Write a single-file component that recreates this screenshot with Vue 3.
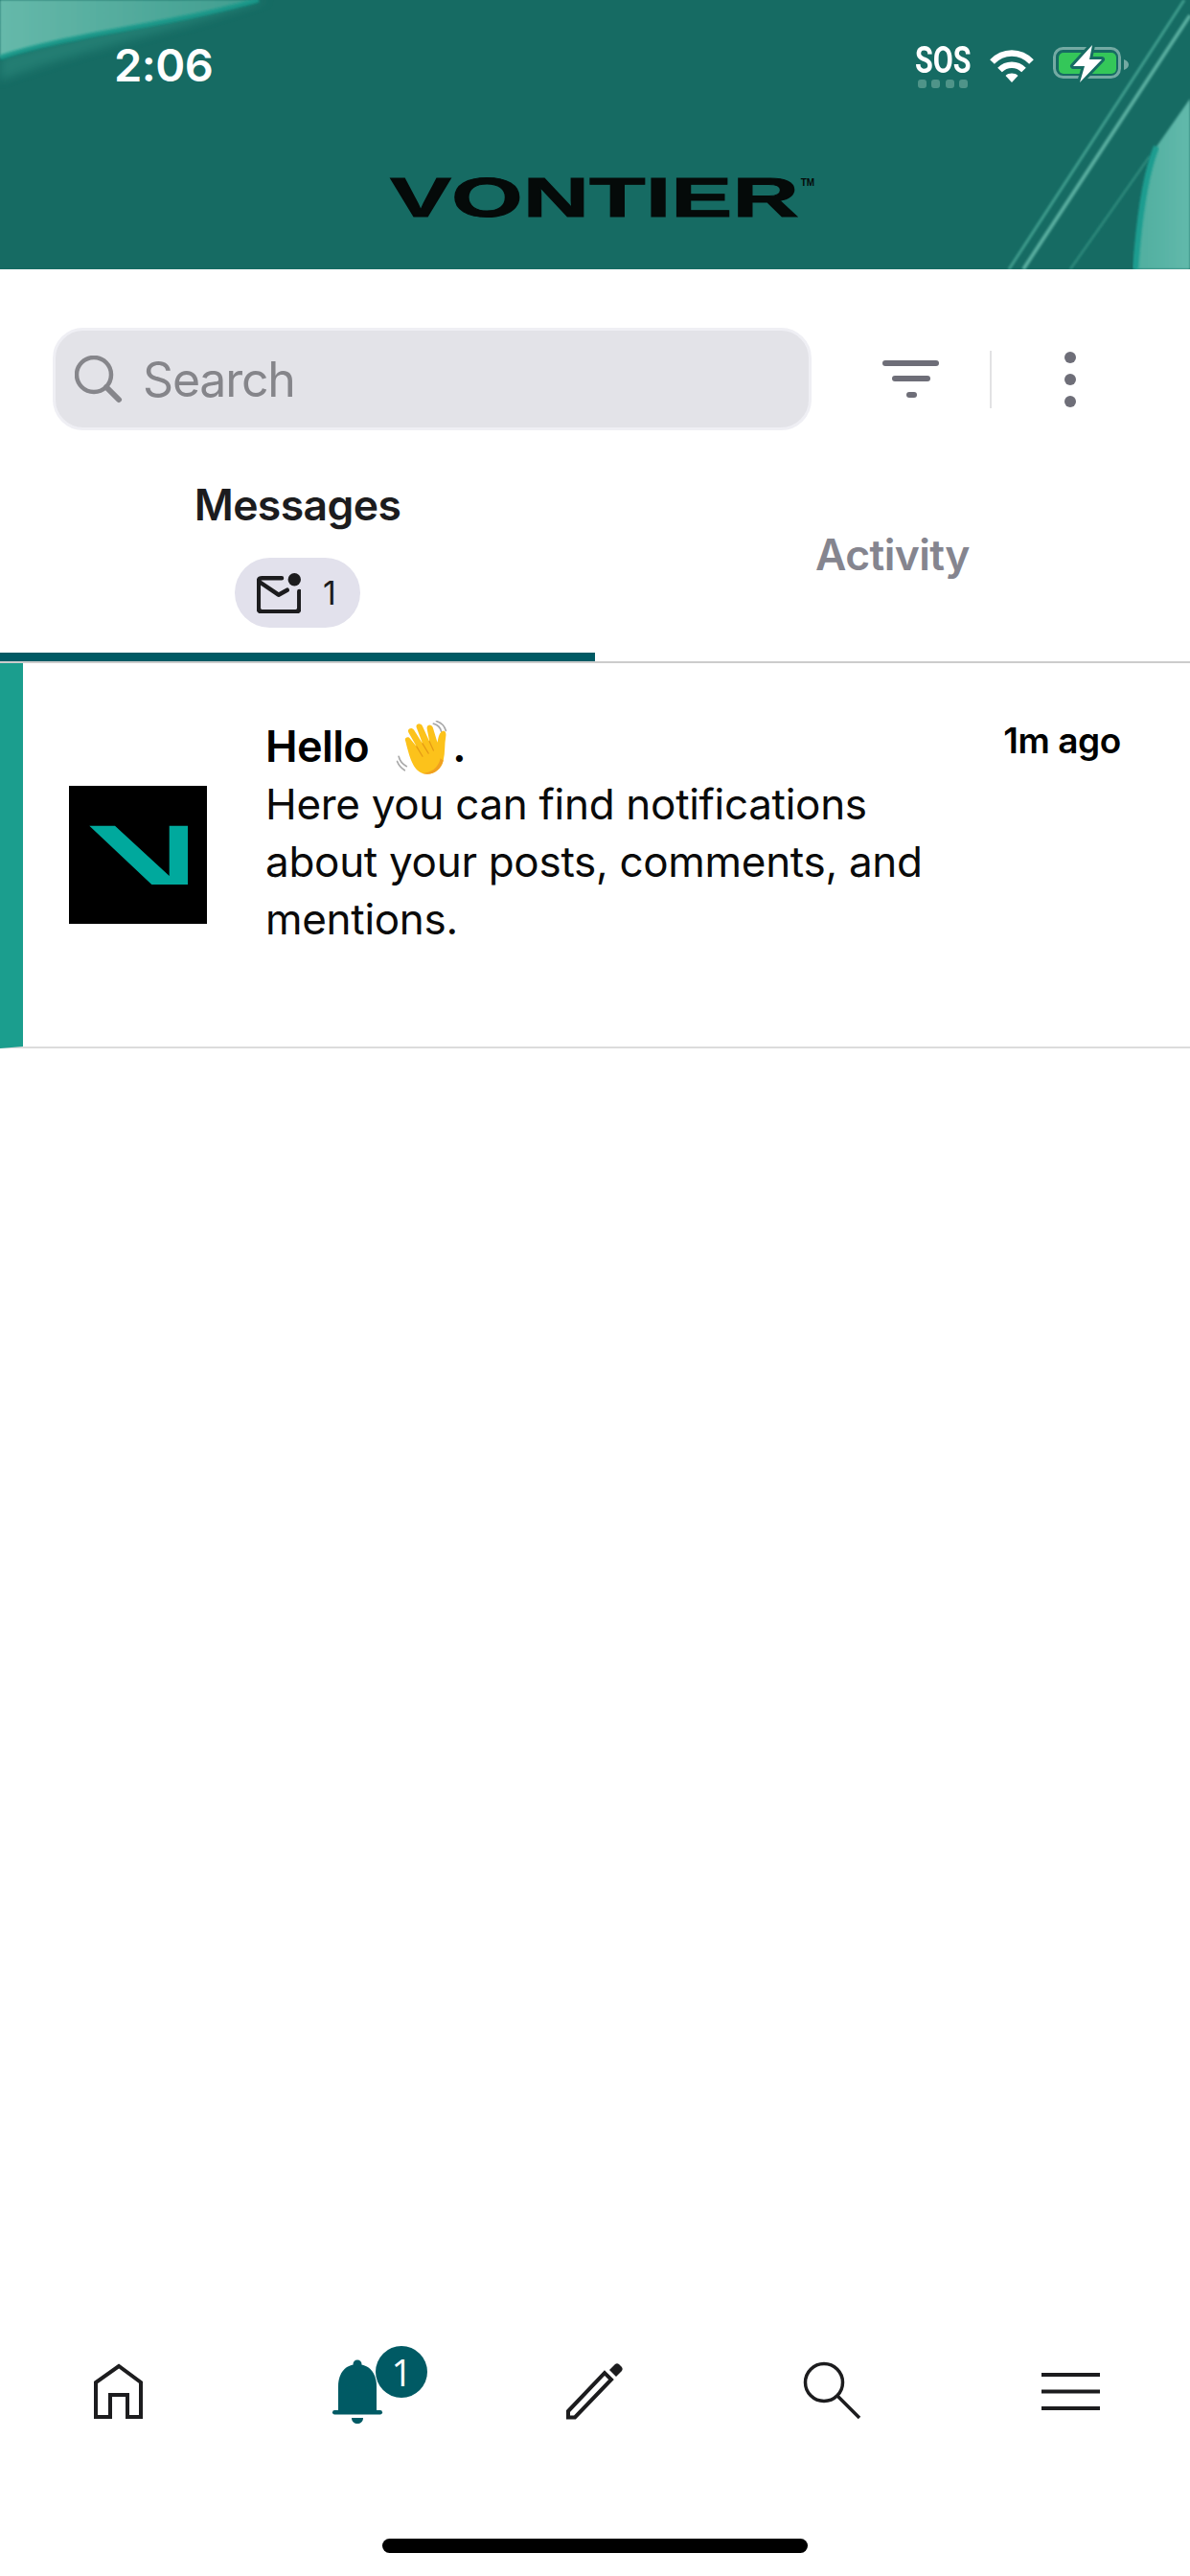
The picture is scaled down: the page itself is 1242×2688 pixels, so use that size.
<script setup>
const body = 'Here you can find notifications about your posts, comments, and mentions.'
</script>

<template>
  <div class="app">
    <header class="header">
      <svg class="art" viewBox="0 0 1242 281" preserveAspectRatio="none">
        <defs>
          <linearGradient id="tl" x1="0" y1="0" x2="1" y2="0">
            <stop offset="0" stop-color="#66b9aa" />
            <stop offset="1" stop-color="#3f9d8f" />
          </linearGradient>
          <linearGradient id="rb" x1="0" y1="0" x2="1" y2="0">
            <stop offset="0" stop-color="#4fae9f" />
            <stop offset="1" stop-color="#62b9ab" />
          </linearGradient>
          <filter id="soft" x="-10%" y="-10%" width="120%" height="120%">
            <feGaussianBlur stdDeviation="1.2" />
          </filter>
          <filter id="softer" x="-10%" y="-30%" width="120%" height="160%">
            <feGaussianBlur stdDeviation="5" />
          </filter>
        </defs>
        <rect width="1242" height="281" fill="#166b63" />
        <path d="M0 84C90 50 180 34 280 0H200C130 30 60 40 0 60Z" fill="#2e8d80" opacity=".55" filter="url(#softer)" />
        <path d="M0 0H270C180 26 80 34 0 60Z" fill="url(#tl)" filter="url(#soft)" />
        <path d="M0 60C80 34 170 28 270 0" fill="none" stroke="#129a8b" stroke-width="5" opacity=".8" filter="url(#soft)" />
        <g fill="none" filter="url(#soft)">
          <path d="M1053 281L1197 60L1236 0" stroke="#3f9c8d" stroke-width="3" />
          <path d="M1068 281L1213 60L1242 16" stroke="#58ad9f" stroke-width="4" />
          <path d="M1117 281L1200 163" stroke="#2f8a7d" stroke-width="2.5" />
        </g>
        <path d="M1242 103L1207 153C1194 185 1188 240 1185 281H1242Z" fill="url(#rb)" filter="url(#soft)" />
        <path d="M1207 153C1194 185 1188 240 1185 281" fill="none" stroke="#1f9d90" stroke-width="6" filter="url(#soft)" />
      </svg>
      <div class="status">
        <span class="time">2:06</span>
        <div class="status-icons">
          <div class="sos">
            <span class="sos-text">SOS</span>
            <div class="sos-dots">
              <i></i><i></i><i></i><i></i>
            </div>
          </div>
          <svg class="wifi" width="48" height="36" viewBox="0 0 48 36">
            <path d="M3.500 14.500C15 2.500 33 2.500 44.500 14.500" fill="none" stroke="#fff" stroke-width="6.500" />
            <path d="M11.500 23C18.500 16 29.500 16 36.500 23" fill="none" stroke="#fff" stroke-width="6.500" />
            <path d="M17.500 29C21 25.800 27 25.800 30.500 29L24 36Z" fill="#fff" />
          </svg>
          <svg class="battery" width="80" height="42" viewBox="0 0 80 42">
            <rect x="1.500" y="4.500" width="68" height="30" rx="9" fill="none" stroke="#74aaa3" stroke-width="3" />
            <rect x="6" y="9" width="60" height="22" rx="5" fill="#34c759" />
            <path d="M74 16C77 17 79 19 79 21.500C79 24 77 26 74 27Z" fill="#74aaa3" />
            <path d="M41 1L21 23H33L28 40L51 16H38Z" fill="#fff" stroke="#166b63" stroke-width="6" paint-order="stroke" stroke-linejoin="round" />
          </svg>
        </div>
      </div>
      <div class="logo">
        <span class="logo-word">VONTIER</span>
        <span class="logo-tm">TM</span>
      </div>
    </header>

    <section class="toolbar">
      <div class="search">
        <svg width="50" height="50" viewBox="0 0 50 50">
          <circle cx="20" cy="20" r="18" fill="none" stroke="#86868b" stroke-width="4.500" />
          <path d="M33 33L46 46" stroke="#86868b" stroke-width="6" stroke-linecap="round" />
        </svg>
        <span class="search-text">Search</span>
      </div>
      <div class="tools">
        <svg width="60" height="40" viewBox="0 0 60 40">
          <rect x="0" y="0" width="59" height="6" rx="3" fill="#6e6e78" />
          <rect x="10" y="16" width="40" height="6" rx="3" fill="#6e6e78" />
          <rect x="25" y="33" width="11" height="6" rx="3" fill="#6e6e78" />
        </svg>
        <span class="divider"></span>
        <svg width="14" height="60" viewBox="0 0 14 60">
          <circle cx="7" cy="7" r="6" fill="#6e6e78" />
          <circle cx="7" cy="30" r="6" fill="#6e6e78" />
          <circle cx="7" cy="53" r="6" fill="#6e6e78" />
        </svg>
      </div>
    </section>

    <nav class="tabs">
      <div class="tab active">
        <span class="tab-label">Messages</span>
        <span class="pill">
          <svg width="46" height="42" viewBox="0 0 46 42">
            <path d="M26 5.300H5.500Q1.800 5.300 1.800 9V36.600Q1.800 40.300 5.500 40.300H40.600Q44.300 40.300 44.300 36.600V19" fill="none" stroke="#1c1c1e" stroke-width="4.500" stroke-linecap="round" />
            <path d="M2.500 9L22.700 22.700L31.700 17.700" fill="none" stroke="#1c1c1e" stroke-width="4.500" stroke-linecap="round" stroke-linejoin="round" />
            <circle cx="39.300" cy="6.700" r="6.700" fill="#1c1c1e" />
          </svg>
          <span class="pill-count">1</span>
        </span>
      </div>
      <div class="tab">
        <span class="tab-label muted">Activity</span>
      </div>
    </nav>

    <article class="row">
      <svg class="avatar" width="144" height="144" viewBox="0 0 144 144">
        <rect width="144" height="144" fill="#000" />
        <path d="M21.300 41.700H48L104.700 94V41.700H124V103H86.300Z" fill="#00a99d" />
      </svg>
      <div class="row-text">
        <div class="row-title">
          <span>Hello</span>
          <svg class="wave" width="60" height="58" viewBox="0 0 54 56">
            <g fill="none" stroke="#a9a9a9" stroke-width="1.600" stroke-linecap="round">
              <path d="M37 3C41 4 44 7 45 11" />
              <path d="M40 0.500C45 2 48 5 49.500 10" />
              <path d="M2 36C3 40 6 44 10 46" />
              <path d="M0.500 41C2 45 5 48 8 50" />
            </g>
            <path d="M9 21C7 18 11 15 13.500 18L20 26L12 12C10 8.500 15 6 17.500 9.500L26 23L20 7C18.500 3 24 1.500 26 5.500L33 21L30.500 8C30 4 35 3 36.500 7L41 22C42 16 43 12 46 10.500C49.500 9.500 50 13 49.500 16C48 24 49 32 47 40C45 50 35 56 26 53C18 50 14 42 9 21Z" fill="#fcc21b" />
            <path d="M20 26L26 36M26 23L32 33M33 21L37 30" fill="none" stroke="#e59a16" stroke-width="1.200" stroke-linecap="round" />
            <path d="M47 40C45 50 35 56 26 53C34 53 42 48 44 38Z" fill="#f0a020" />
          </svg>
          <span class="period">.</span>
        </div>
        <p class="row-body">{{ body }}</p>
      </div>
      <span class="row-time">1m ago</span>
    </article>

    <footer class="bottom">
      <div class="bar">
        <div class="bar-item">
          <svg width="100" height="100" viewBox="74 2440 100 100">
            <path d="M100 2522V2486L124 2469L147 2486V2522H133V2499H115V2522Z" fill="none" stroke="#1c1c1e" stroke-width="4" />
          </svg>
        </div>
        <div class="bar-item bell">
          <svg width="100" height="100" viewBox="323 2440 100 100">
            <circle cx="373" cy="2467" r="4.500" fill="#005a64" />
            <path d="M353 2516V2490C353 2476 361 2467 373 2467C385 2467 393 2476 393 2490V2516Z" fill="#005a64" />
            <rect x="347" y="2515" width="52" height="4.500" rx="2.200" fill="#005a64" />
            <path d="M367 2523H379C379 2531 367 2531 367 2523Z" fill="#005a64" />
          </svg>
          <span class="badge">1</span>
        </div>
        <div class="bar-item">
          <svg width="100" height="100" viewBox="571 2440 100 100">
            <path d="M593 2516L631 2476L638 2483L600 2522.500H593Z" fill="none" stroke="#1c1c1e" stroke-width="4" />
            <path d="M636 2473L642 2467Q644 2465.500 646 2467L649 2470Q650.500 2472 649 2474L643 2480Z" fill="#1c1c1e" />
          </svg>
        </div>
        <div class="bar-item">
          <svg width="100" height="100" viewBox="818 2440 100 100">
            <circle cx="859" cy="2486" r="19.500" fill="none" stroke="#1c1c1e" stroke-width="3.500" />
            <path d="M873 2500L896 2523" stroke="#1c1c1e" stroke-width="3.500" />
          </svg>
        </div>
        <div class="bar-item">
          <svg width="100" height="100" viewBox="1068 2440 100 100">
            <path d="M1087 2478H1148M1087 2495.500H1148M1087 2513H1148" stroke="#1c1c1e" stroke-width="4" />
          </svg>
        </div>
      </div>
      <div class="home-zone">
        <span class="home-indicator"></span>
      </div>
    </footer>
  </div>
</template>

<style scoped>
.app {
  position: relative;
  display: flex;
  flex-direction: column;
  width: 1242px;
  height: 2688px;
  background: #fff;
  overflow: hidden;
  font-family: Inter, "Noto Sans", sans-serif;
  color: #000;
}
.header {
  position: relative;
  height: 281px;
  flex: none;
}
.art {
  position: absolute;
  inset: 0;
  width: 1242px;
  height: 281px;
}
.status {
  position: relative;
  display: flex;
  justify-content: space-between;
  align-items: flex-start;
  padding: 41px 63px 0 119px;
  height: 145px;
  box-sizing: border-box;
}
.time {
  color: #fff;
  font-size: 47px;
  font-weight: 600;
  line-height: 54px;
  letter-spacing: -0.5px;
}
.status-icons {
  display: flex;
  align-items: flex-start;
  gap: 19px;
  padding-top: 8px;
}
.sos {
  display: flex;
  flex-direction: column;
  width: 58px;
}
.sos-text {
  display: block;
  height: 28px;
  font-family: Roboto, sans-serif;
  font-weight: 700;
  font-size: 30.5px;
  line-height: 28px;
  white-space: nowrap;
  color: #fff;
  transform: scaleY(1.28);
}
.sos-dots {
  display: flex;
  justify-content: space-between;
  padding: 0 3px;
  margin-top: 6px;
}
.sos-dots i {
  display: block;
  width: 9px;
  height: 9px;
  border-radius: 3px;
  background: #4f9489;
}
.wifi {
  margin-top: 1px;
}
.battery {
  margin-top: -3px;
}
.logo {
  position: relative;
  display: flex;
  align-items: flex-start;
  padding-left: 407px;
  margin-top: 39px;
}
.logo-word {
  display: block;
  height: 44px;
  font-family: "Liberation Sans", sans-serif;
  font-weight: 700;
  font-size: 96px;
  line-height: 44px;
  white-space: nowrap;
  color: #050a09;
  -webkit-text-stroke: 1.5px #050a09;
  transform: scaleY(0.6);
}
.logo-tm {
  margin: 2px 0 0 2px;
  font-family: "Liberation Sans", sans-serif;
  font-weight: 700;
  font-size: 10px;
  line-height: 10px;
  color: #050a09;
}
.toolbar {
  display: flex;
  align-items: center;
  padding: 61px 0 0 55px;
  flex: none;
}
.search {
  display: flex;
  align-items: center;
  width: 792px;
  height: 107px;
  box-sizing: border-box;
  padding-left: 20px;
  gap: 21px;
  background: #e3e3e8;
  border: 3px solid #efeff4;
  border-radius: 32px;
}
.search-text {
  font-size: 50px;
  letter-spacing: -1.2px;
  color: #85858a;
  line-height: 60px;
}
.tools {
  display: flex;
  align-items: center;
  margin-left: 74px;
}
.divider {
  width: 2px;
  height: 60px;
  margin: 0 75px 0 52px;
  background: #e2e2e4;
}
.tabs {
  display: grid;
  grid-template-columns: 621px 621px;
  height: 222px;
  box-sizing: border-box;
  margin-top: 21px;
  border-bottom: 2px solid #cccccc;
  flex: none;
}
.tab {
  display: flex;
  flex-direction: column;
  align-items: center;
  justify-content: center;
  padding-bottom: 3px;
}
.tab.active {
  justify-content: flex-start;
  padding-top: 32px;
  padding-bottom: 0;
  border-bottom: 9px solid #005a64;
  height: 220px;
  box-sizing: border-box;
}
.tab-label {
  font-size: 44.5px;
  font-weight: 600;
  line-height: 50px;
  letter-spacing: -0.6px;
  color: #1c1c1e;
}
.tab-label.muted {
  color: #85858f;
}
.pill {
  display: flex;
  align-items: center;
  justify-content: center;
  gap: 23px;
  width: 131px;
  height: 73px;
  margin-top: 30px;
  padding-right: 2px;
  box-sizing: border-box;
  border-radius: 37px;
  background: #e2e1ec;
}
.pill-count {
  font-size: 34px;
  line-height: 40px;
  color: #1c1c1e;
}
.row {
  display: flex;
  align-items: center;
  height: 402px;
  box-sizing: border-box;
  padding: 0 72px 0 48px;
  border-left: 24px solid #1b9e8e;
  border-bottom: 2px solid #dcdcdc;
  flex: none;
}
.avatar {
  flex: none;
  margin-right: 61px;
}
.row-text {
  flex: 1;
  align-self: flex-start;
  padding-top: 57px;
  min-width: 0;
}
.row-title {
  display: flex;
  align-items: center;
  height: 60px;
  font-size: 45px;
  font-weight: 600;
  letter-spacing: -0.6px;
  line-height: 60px;
}
.wave {
  margin: 4px 0 0 27px;
  flex: none;
}
.period {
  margin-left: 0;
}
.row-body {
  margin: 0;
  max-width: 720px;
  font-size: 44px;
  line-height: 60px;
  letter-spacing: -0.3px;
  color: #0a0a0a;
}
.row-time {
  align-self: flex-start;
  margin-top: 59px;
  font-size: 37px;
  font-weight: 600;
  line-height: 44px;
  white-space: nowrap;
  letter-spacing: -0.4px;
}
.bottom {
  margin-top: auto;
  flex: none;
}
.bar {
  display: grid;
  grid-template-columns: repeat(5, 1fr);
  height: 100px;
}
.bar-item {
  position: relative;
  display: flex;
  justify-content: center;
}
.badge {
  position: absolute;
  left: 144px;
  top: 8px;
  width: 54px;
  height: 54px;
  border-radius: 50%;
  background: #005a64;
  color: #fff;
  display: flex;
  align-items: center;
  justify-content: center;
  font-family: "Open Sans", sans-serif;
  font-size: 38px;
  line-height: 54px;
}
.home-zone {
  display: flex;
  justify-content: center;
  height: 148px;
  padding-top: 109px;
  box-sizing: border-box;
}
.home-indicator {
  display: block;
  width: 444px;
  height: 15px;
  border-radius: 8px;
  background: #000;
}
</style>
